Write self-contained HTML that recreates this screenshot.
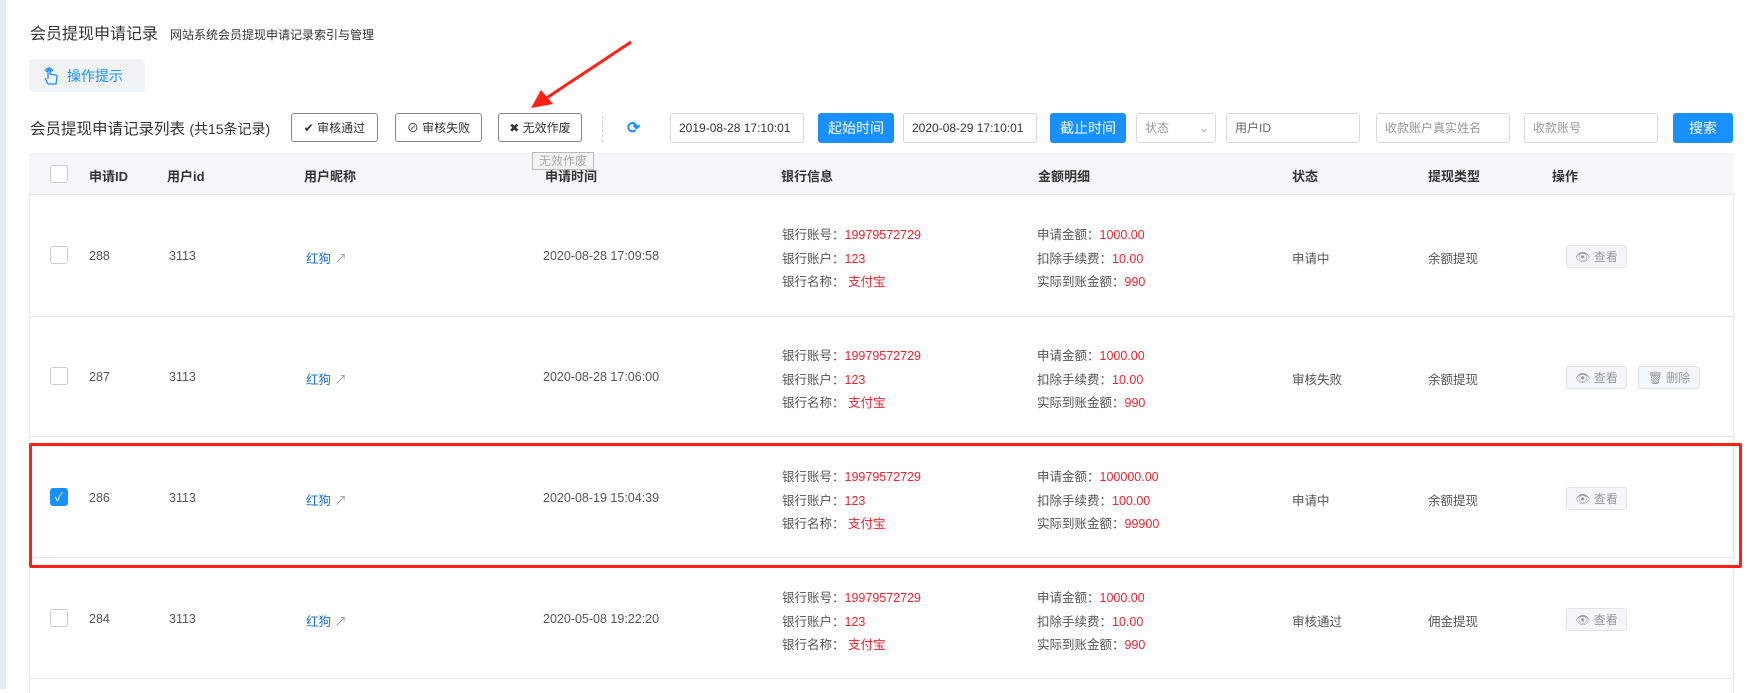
<!DOCTYPE html>
<html><head><meta charset="utf-8"><style>
*{box-sizing:border-box;margin:0;padding:0}
body{width:1747px;height:689px;overflow:hidden;background:#fff;font-family:"Liberation Sans","Noto Sans CJK SC",sans-serif;color:#555;font-size:13px;position:relative}
.abs{position:absolute}
.lbar{left:0;top:0;width:6px;height:689px;background:#e9ecef}
.btn{position:absolute;border:1px solid #888;border-radius:3px;background:#fff;color:#333;font-size:12px;display:flex;align-items:center;justify-content:center;height:29px;top:113px}
.inp{position:absolute;top:113px;height:30px;border:1px solid #d9d9d9;border-radius:3px;font-size:12px;color:#333;padding-left:8px;line-height:28px}
.ph{color:#999}
.blue{position:absolute;top:113px;height:30px;background:#1890ff;color:#fff;border-radius:3px;font-size:14px;display:flex;align-items:center;justify-content:center}
.tbl{left:29px;top:153px;width:1705px;height:540px;border-left:1px solid #e8e8e8;border-right:1px solid #e8e8e8}
.hd{left:29px;top:153px;width:1705px;height:42px;background:#f7f7f9;border-bottom:1px solid #e8e8e8}
.hdt{position:absolute;top:166px;font-size:13px;font-weight:bold;color:#333}
.rowline{position:absolute;left:29px;width:1705px;height:1px;background:#e8e8e8}
.cell{position:absolute;font-size:12.5px;color:#555;white-space:nowrap}
.cb{position:absolute;left:50px;width:18px;height:18px;border:1px solid #ccc;border-radius:3px;background:#fff}
.red{color:#f5222d}
.lk{color:#1a6fd6}
.ob{position:absolute;height:23px;border:1px solid #e4e4e4;background:#f5f6f8;border-radius:3px;color:#999;font-size:12px;display:flex;align-items:center;justify-content:center;gap:6px}
</style></head><body>
<div class="abs lbar"></div>
<div class="abs" style="left:30px;top:20px;font-size:16px;color:#333">会员提现申请记录<span style="font-size:12px;margin-left:12px;color:#333">网站系统会员提现申请记录索引与管理</span></div>
<div class="abs" style="left:29px;top:59px;width:116px;height:33px;background:#f0f2f4;border-radius:4px;color:#1890ff;font-size:14px;display:flex;align-items:center;padding-left:14px;gap:8px">
<svg width="16" height="20" viewBox="0 0 16 20" fill="none" stroke="#1890ff" stroke-width="1.3"><path d="M5 18 L2 12 M5 18 H13 L14 11 Q14 9 12 9 L7 8 V4 Q7 2.5 6 2.5 Q5 2.5 5 4 V13"/><path d="M2 5 Q6 -1 10 5"/><path d="M3.5 6 Q6 2 8.5 6"/></svg>操作提示</div>
<div class="abs" style="left:30px;top:117px;font-size:15.5px;color:#333">会员提现申请记录列表 <span style="font-size:14px">(共15条记录)</span></div>
<div class="btn" style="left:291px;width:87px">✔ 审核通过</div>
<div class="btn" style="left:395px;width:87px">⊘ 审核失败</div>
<div class="btn" style="left:498px;width:84px">✖ 无效作废</div>
<div class="abs" style="left:602px;top:116px;height:26px;border-left:1px dashed #ccc"></div>
<div class="abs" style="left:627px;top:118px;color:#1890ff;font-size:16px;font-weight:bold">⟳</div>
<div class="inp" style="left:670px;width:134px">2019-08-28 17:10:01</div>
<div class="blue" style="left:818px;width:76px">起始时间</div>
<div class="inp" style="left:903px;width:134px">2020-08-29 17:10:01</div>
<div class="blue" style="left:1050px;width:76px">截止时间</div>
<div class="inp ph" style="left:1136px;width:80px">状态<span style="position:absolute;right:6px;color:#aaa">⌄</span></div>
<div class="inp ph" style="left:1226px;width:134px;color:#666">用户ID</div>
<div class="inp ph" style="left:1376px;width:134px">收款账户真实姓名</div>
<div class="inp ph" style="left:1524px;width:134px">收款账号</div>
<div class="blue" style="left:1673px;width:60px">搜索</div>

<div class="abs tbl"></div>
<div class="abs hd"></div>
<div class="cb" style="top:165px"></div>
<div class="hdt" style="left:89px">申请ID</div>
<div class="hdt" style="left:167px">用户id</div>
<div class="hdt" style="left:304px">用户昵称</div>
<div class="hdt" style="left:545px">申请时间</div>
<div class="hdt" style="left:781px">银行信息</div>
<div class="hdt" style="left:1038px">金额明细</div>
<div class="hdt" style="left:1292px">状态</div>
<div class="hdt" style="left:1428px">提现类型</div>
<div class="hdt" style="left:1552px">操作</div>
<div class="abs" style="left:532px;top:152px;width:62px;height:18px;border:1px solid #bbb;background:#f4f4f4;color:#aaa;font-size:12px;text-align:center;line-height:16px">无效作废</div>

<div class="rowline" style="top:316px"></div>
<div class="rowline" style="top:436px"></div>
<div class="rowline" style="top:557px"></div>
<div class="rowline" style="top:678px"></div>

<div class="cb" style="top:246px"></div>
<div class="cell" style="left:89px;top:249px">288</div>
<div class="cell" style="left:169px;top:249px">3113</div>
<div class="cell lk" style="left:306px;top:248px">红狗 <span style="color:#999">↗</span></div>
<div class="cell" style="left:543px;top:249px">2020-08-28 17:09:58</div>
<div class="cell" style="left:782px;top:224px;line-height:23.5px">银行账号：<span class="red">19979572729</span><br>银行账户：<span class="red">123</span><br>银行名称： <span class="red">支付宝</span></div>
<div class="cell" style="left:1037px;top:224px;line-height:23.5px">申请金额：<span class="red">1000.00</span><br>扣除手续费：<span class="red">10.00</span><br>实际到账金额：<span class="red">990</span></div>
<div class="cell" style="left:1292px;top:248px">申请中</div>
<div class="cell" style="left:1428px;top:248px">余额提现</div>
<div class="ob" style="left:1566px;top:245px;width:61px">👁 查看</div>

<div class="cb" style="top:367px"></div>
<div class="cell" style="left:89px;top:370px">287</div>
<div class="cell" style="left:169px;top:370px">3113</div>
<div class="cell lk" style="left:306px;top:369px">红狗 <span style="color:#999">↗</span></div>
<div class="cell" style="left:543px;top:370px">2020-08-28 17:06:00</div>
<div class="cell" style="left:782px;top:345px;line-height:23.5px">银行账号：<span class="red">19979572729</span><br>银行账户：<span class="red">123</span><br>银行名称： <span class="red">支付宝</span></div>
<div class="cell" style="left:1037px;top:345px;line-height:23.5px">申请金额：<span class="red">1000.00</span><br>扣除手续费：<span class="red">10.00</span><br>实际到账金额：<span class="red">990</span></div>
<div class="cell" style="left:1292px;top:369px">审核失败</div>
<div class="cell" style="left:1428px;top:369px">余额提现</div>
<div class="ob" style="left:1566px;top:366px;width:61px">👁 查看</div>
<div class="ob" style="left:1638px;top:366px;width:62px">🗑 删除</div>

<div class="cb" style="top:488px;background:#1890ff;border-color:#1890ff;color:#fff;font-size:12px;text-align:center;line-height:16px">✓</div>
<div class="cell" style="left:89px;top:491px">286</div>
<div class="cell" style="left:169px;top:491px">3113</div>
<div class="cell lk" style="left:306px;top:490px">红狗 <span style="color:#999">↗</span></div>
<div class="cell" style="left:543px;top:491px">2020-08-19 15:04:39</div>
<div class="cell" style="left:782px;top:466px;line-height:23.5px">银行账号：<span class="red">19979572729</span><br>银行账户：<span class="red">123</span><br>银行名称： <span class="red">支付宝</span></div>
<div class="cell" style="left:1037px;top:466px;line-height:23.5px">申请金额：<span class="red">100000.00</span><br>扣除手续费：<span class="red">100.00</span><br>实际到账金额：<span class="red">99900</span></div>
<div class="cell" style="left:1292px;top:490px">申请中</div>
<div class="cell" style="left:1428px;top:490px">余额提现</div>
<div class="ob" style="left:1566px;top:487px;width:61px">👁 查看</div>

<div class="cb" style="top:609px"></div>
<div class="cell" style="left:89px;top:612px">284</div>
<div class="cell" style="left:169px;top:612px">3113</div>
<div class="cell lk" style="left:306px;top:611px">红狗 <span style="color:#999">↗</span></div>
<div class="cell" style="left:543px;top:612px">2020-05-08 19:22:20</div>
<div class="cell" style="left:782px;top:587px;line-height:23.5px">银行账号：<span class="red">19979572729</span><br>银行账户：<span class="red">123</span><br>银行名称： <span class="red">支付宝</span></div>
<div class="cell" style="left:1037px;top:587px;line-height:23.5px">申请金额：<span class="red">1000.00</span><br>扣除手续费：<span class="red">10.00</span><br>实际到账金额：<span class="red">990</span></div>
<div class="cell" style="left:1292px;top:611px">审核通过</div>
<div class="cell" style="left:1428px;top:611px">佣金提现</div>
<div class="ob" style="left:1566px;top:608px;width:61px">👁 查看</div>

<div class="abs" style="left:29px;top:443px;width:1713px;height:125px;border:3px solid #ff2016;border-radius:2px"></div>
<svg class="abs" style="left:0;top:0" width="1747" height="689"><line x1="631" y1="42" x2="545" y2="99" stroke="#ff2016" stroke-width="3"/><polygon points="531,108 541,90 553,104" fill="#ff2016"/></svg>
</body></html>
